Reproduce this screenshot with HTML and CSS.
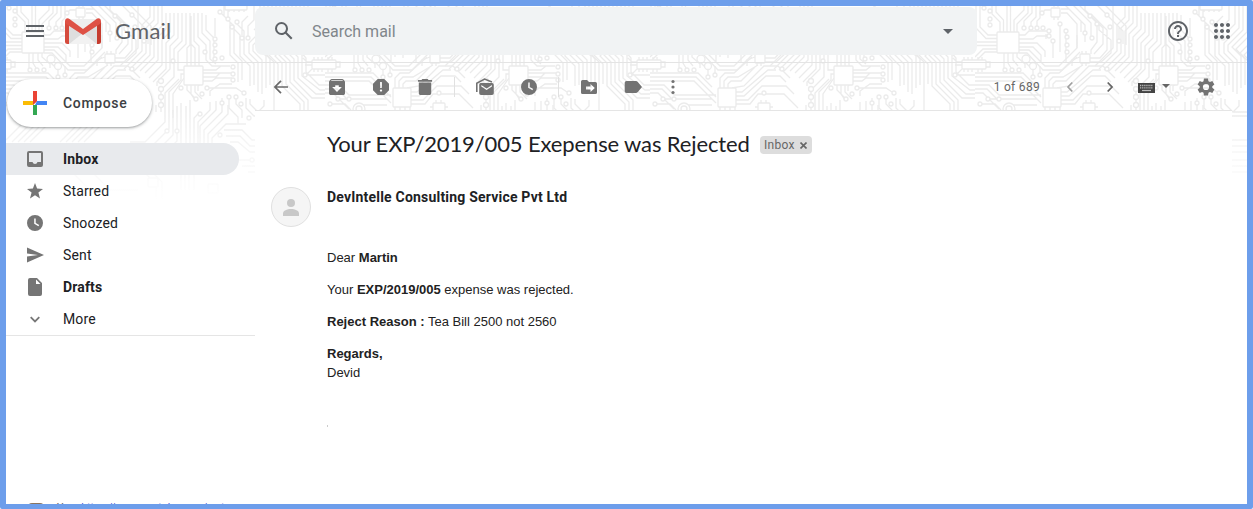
FILE: index.html
```html
<!DOCTYPE html>
<html lang="en">
<head>
<meta charset="utf-8">
<title>Gmail</title>
<link rel="stylesheet" href="styles.css">
</head>
<body>
<div class="app">
  <svg class="circuit" width="1253" height="210" aria-hidden="true">
    <defs>
      <pattern id="board" width="325" height="210" patternUnits="userSpaceOnUse">
        <g class="trace">
          <!-- traces above and left of the main chip -->
          <path d="M25 32V22L17 14V5M28.500 32V20L21 12V5M32 32V5M35.500 32V5M39 32V20L49 10V5M42 32V24L53 13V5M49 26V21L57 13V5M56 26V22L61 17V5M62 26V21L65 18V5"/>
          <path d="M22 35H13L5 27V5M22 38.500H11L1 28V5M22 42H0M22 45.500H0M22 49H8L0 57M22 52H10L2 60"/>
          <!-- traces fanning right from the main chip -->
          <path d="M44 35H50L54 31H72M44 39H58L62 36H73M44 43H62L70 51V57M44 47H58L66 55V62M44 50H54L70 66H84L102 48V35M44 53H52L68 70H87L105 52"/>
          <path d="M29 53V68M33 53V63L36 68M38 53V60L43 66M42 53V57L50 64V68"/>
          <path d="M0 73H48L62 87M0 77H46L66 97M0 81H44L66 103M0 85H14L24 95H66M0 89H12L22 99H62M0 93H8L24 109M13 99H24M5 104H20L26 110M38 105H62"/>
          <path d="M58 76V70L50 62M65 74V66M70 88V78L75 73H84L102 57M74 88V81L78 77H88L108 65M78 88V84L81 81H91L105 67M82 88L94 86L114 66H128L140 78M86 92H92L118 70H126M86 96H94L116 76H130L136 82M86 100H98L112 86H136L144 94M86 104H100L108 94H134L148 108"/>
          <!-- small chip traces -->
          <path d="M76 10H70L67 13M86 9H94L106 21V32M86 13H92L102 24V48M90 5L110 25V42M98 5L116 23V36M104 5L122 23V42L116 50V54M110 5V10L128 28V44L119 54M116 14L132 30V50L125 58H115M124 24V30L136 40V53L126 62H115M132 15L144 27V40M122 5L148 31V44M130 5L151 26V45"/>
          <path d="M91 33V62M78 42V58M71 39V34M85 24V52M97 66V60L105 57"/>
          <!-- nested runs across the centre -->
          <path d="M120 66L138 48V5M124 69L142 51V25L150 17V5M129 70L146 53V28L154 20V5M134 71L150 55V31L158 23V5M140 71L154 57V34L162 26V5M145 73L158 60V37L166 29V13M149 78L162 65V40L170 32V13M153 82L166 69V43L174 35V13M157 86V82L170 69V46L178 38V13"/>
          <path d="M161 112V90L174 77V49L182 41V13M165 112V93L179 79M184 70H178V52L186 44V13M184 74H181V80L169 92V112M184 78L173 94V118M187 66V48L190 45V13M191 66V16M195 66V48L190 43M199 66V46L194 41V13"/>
          <path d="M198 13V37L206 45V60L212 66H230M203 70H216L221 66M203 73H230M203 77H216L220 73H232M203 81H212L216 78H232M207 88H236L242 92M210 96V91L220 84H232M198 91V86L204 81M191 85V94L195 100M187 85V90L196 99M195 85V92L202 99M202 13V33L210 41V59L216 64M206 15V30L214 38V60"/>
          <path d="M156 105V112M215 18V36M220 12L230 22V55L238 63V82M224 5V16L234 26V53L242 61V80M228 18V10M232 27L240 35V56L250 66V86M237 24L244 31V54L254 64V85M242 35V22L248 16M248 38V26L254 20V5M254 30L260 24V5M264 5V28L249 43V53L258 62V92M268 5V30L253 45V51L262 60V94M272 5V32L257 47L266 56V88M276 5V34L261 49L270 59V85M280 5V38L265 53L274 62V110"/>
          <!-- left edge of the wide chip -->
          <path d="M284 5V40L269 55L278 64V84M288 5V43L275 56L282 63V86L300 104V112M292 5V42L279 55L286 62V84L304 102V112M296 5V41L283 54L290 61V82L308 100V112M300 5V39L287 52L294 59V80L312 98H325M304 5V37L291 50L298 57V78L316 94H325M308 5V35L295 48L302 55V76L320 90H325M310 42L300 51L306 58V72L319 85H325M312 62H307L303 58M312 65H305M312 69L306 75H325"/>
          <path d="M314 60V57M318 60V57M322 60V57M314 69V72M318 69V72M322 69V72M3 60V57M7 60V57M3 69V72M7 69V72M11 62H15V67H11"/>
          <!-- pins -->
          <path d="M79 7V4M83 7V4M79 17V20M83 17V20M107 54V51M111 54V51M107 63V66M111 63V66M70 107V111M75 107V111M80 107V111M85 107V111M229 10V12M234 10V12M239 10V12M244 10V12M111 103V100M116 103V100M108 107H105M120 107H123"/>
          <!-- lower half -->
          <path d="M6 140L34 112M12 142L42 112M18 142L48 112M24 142L54 112M30 142L60 112M60 142L90 112M66 142L96 112M72 142L102 112M78 142L108 112M84 142L114 112M130 142H145L165 122V112M132 148H150L169 129V112M128 154H154L173 135V110M120 160H158L177 141V106M116 166H162L181 145V103M181 190V150L186 145V106M185 190V152L190 147V100M189 190V154L194 149V118L199 113M194 190V156L198 152V122L210 110V102M200 150V126L216 110V101M204 150V130L222 112V104M208 148V134L228 114V105M212 146V138L226 124H246M224 130H242L252 140H300M226 136H240L250 146H310M230 142H238L250 152H325M238 160H325M242 166H300M248 172H325M150 170L162 182V200M144 172L156 184V200M90 170L110 190H138M70 170L90 190H104"/>
          <path d="M236 97V104L242 110V118M229 98V108L238 117V124M222 98V102M246 98V108L254 116H280M264 100V106L258 112M250 99V104L258 112H325"/>
        </g>
        <g class="node">
          <circle cx="49" cy="28" r="2"/><circle cx="56" cy="28" r="2"/><circle cx="62" cy="28" r="2"/><circle cx="68" cy="28" r="2"/><circle cx="74" cy="31" r="2"/><circle cx="74" cy="36" r="2"/><circle cx="78" cy="41" r="2"/><circle cx="15" cy="11" r="2"/><circle cx="15" cy="19" r="2"/><circle cx="15" cy="25" r="2"/><circle cx="9" cy="8" r="2"/>
          <circle cx="30" cy="70" r="2"/><circle cx="37" cy="70" r="2"/><circle cx="44" cy="70" r="2"/><circle cx="51" cy="59" r="4"/><circle cx="58" cy="66" r="3.500"/><circle cx="58" cy="77" r="2"/><circle cx="65" cy="75" r="2"/>
          <circle cx="92" cy="37" r="2"/><circle cx="92" cy="45" r="2"/><circle cx="92" cy="52" r="2"/><circle cx="91" cy="31" r="2"/><circle cx="67" cy="13" r="2"/><circle cx="85" cy="24" r="2"/><circle cx="115" cy="16" r="2"/><circle cx="122" cy="24" r="2"/><circle cx="110" cy="33" r="2"/><circle cx="117" cy="38" r="2"/><circle cx="132" cy="15" r="2"/><circle cx="144" cy="41" r="2"/><circle cx="135" cy="27" r="2"/><circle cx="132" cy="69" r="2"/><circle cx="114" cy="93" r="2"/>
          <circle cx="13" cy="99" r="2"/><circle cx="24" cy="99" r="2"/><circle cx="5" cy="104" r="2"/><circle cx="34" cy="109" r="6"/><circle cx="34" cy="109" r="3"/>
          <circle cx="161" cy="81" r="2.500"/><circle cx="161" cy="89" r="2.500"/><circle cx="161" cy="97" r="2.500"/><circle cx="161" cy="105" r="2.500"/><circle cx="181" cy="88" r="2"/><circle cx="173" cy="61" r="2"/><circle cx="196" cy="99" r="2"/><circle cx="202" cy="94" r="2"/><circle cx="200" cy="114" r="2"/><circle cx="207" cy="88" r="2"/><circle cx="244" cy="93" r="2"/><circle cx="233" cy="67" r="2"/><circle cx="233" cy="74" r="2"/><circle cx="233" cy="80" r="2"/>
          <circle cx="215" cy="39" r="2"/><circle cx="215" cy="45" r="2"/><circle cx="215" cy="52" r="2"/><circle cx="215" cy="59" r="2"/><circle cx="222" cy="58" r="2"/><circle cx="205" cy="52" r="2"/><circle cx="220" cy="12" r="2"/><circle cx="228" cy="19" r="2"/><circle cx="232" cy="27" r="2"/><circle cx="237" cy="22" r="2"/><circle cx="242" cy="38" r="2"/><circle cx="248" cy="38" r="2"/>
          <circle cx="229" cy="97" r="2"/><circle cx="236" cy="97" r="2"/><circle cx="241" cy="104" r="2"/><circle cx="222" cy="103" r="2"/><circle cx="249" cy="118" r="2"/><circle cx="167" cy="131" r="2"/><circle cx="177" cy="131" r="2"/><circle cx="220" cy="135" r="2"/><circle cx="252" cy="160" r="2"/><circle cx="305" cy="42" r="2"/><circle cx="310" cy="41" r="2"/><circle cx="305" cy="75" r="2"/><circle cx="317" cy="49" r="2"/>
        </g>
        <g class="chip">
          <rect x="22" y="32" width="22" height="21" rx="1"/><rect x="184" y="66" width="19" height="19" rx="1"/><rect x="76" y="8" width="9" height="9" rx="1"/><rect x="105" y="54" width="10" height="9" rx="1"/><rect x="225" y="0" width="22" height="10" rx="1"/><rect x="312" y="60" width="24" height="9" rx="1"/><rect x="-13" y="60" width="24" height="9" rx="1"/><rect x="68" y="88" width="18" height="19" rx="1"/><rect x="108" y="103" width="12" height="10" rx="1"/><rect x="148" y="178" width="10" height="9" rx="1"/><rect x="208" y="184" width="10" height="9" rx="1"/>
        </g>
      </pattern>
      <linearGradient id="fade" x1="0" y1="0" x2="0" y2="1">
        <stop offset="0.520" stop-color="#fff" stop-opacity="0"/><stop offset="0.700" stop-color="#fff" stop-opacity="0.550"/><stop offset="0.960" stop-color="#fff"/>
      </linearGradient>
    </defs>
    <rect width="1253" height="210" fill="url(#board)"/>
    <rect width="1253" height="210" fill="url(#fade)"/>
  </svg>

  <header class="header">
    <div class="brand">
      <svg class="menu" width="18" height="12" viewBox="0 0 18 12"><path d="M0 0h18v2H0zM0 5h18v2H0zM0 10h18v2H0z" fill="#5f6368"/></svg>
      <svg class="logo" width="36" height="27" viewBox="0 0 36 27">
        <path d="M2.500 1h31v25h-31z" fill="#e3e3e3"/><path d="M4 26L18 15l14 11z" fill="#f2f2f2"/><path d="M18 15L4 5v21zM18 15L32 5v21z" fill="#d8d8d8" opacity=".45"/>
        <path d="M3 1h30L18 12z" fill="#eee"/><path d="M0 3.500L4 6v20H2.500Q0 26 0 23.500z" fill="#d54b3d"/><path d="M36 3.500L32 6v20h1.500q2.500 0 2.500-2.500z" fill="#c63c2f"/>
        <path d="M0 3.500C0 .5 2.500-.5 4.500 1L18 11 31.500 1C33.500-.5 36 .5 36 3.500c0 1.500-.6 2.100-1.500 2.700L18 17 1.500 6.200C.6 5.600 0 5 0 3.500z" fill="#de5145"/>
      </svg>
      <span class="wordmark">Gmail</span>
    </div>
    <div class="search">
      <svg width="24" height="24" viewBox="0 0 24 24"><path d="M20.490 19l-5.730-5.730C15.530 12.200 16 10.910 16 9.500A6.500 6.500 0 1 0 9.500 16c1.410 0 2.700-.47 3.770-1.240L19 20.490 20.490 19zM5 9.500C5 7.010 7.010 5 9.500 5S14 7.010 14 9.500 11.990 14 9.500 14 5 11.990 5 9.500z" fill="#5f6368"/></svg>
      <span class="placeholder">Search mail</span>
      <svg class="caret" width="10" height="5" viewBox="0 0 10 5"><path d="M0 0h10L5 5z" fill="#5f6368"/></svg>
    </div>
    <div class="header-actions">
      <svg width="24" height="24" viewBox="0 0 24 24"><path d="M11 18h2v-2h-2v2zm1-16C6.480 2 2 6.480 2 12s4.480 10 10 10 10-4.480 10-10S17.520 2 12 2zm0 18c-4.410 0-8-3.590-8-8s3.590-8 8-8 8 3.590 8 8-3.590 8-8 8zm0-14c-2.210 0-4 1.790-4 4h2c0-1.100.9-2 2-2s2 .9 2 2c0 2-3 1.750-3 5h2c0-2.250 3-2.500 3-5 0-2.210-1.790-4-4-4z" fill="#5f6368"/></svg>
      <svg width="24" height="24" viewBox="0 0 24 24"><path d="M6 8c1.100 0 2-.9 2-2s-.9-2-2-2-2 .9-2 2 .9 2 2 2zm6 12c1.100 0 2-.9 2-2s-.9-2-2-2-2 .9-2 2 .9 2 2 2zm-6 0c1.100 0 2-.9 2-2s-.9-2-2-2-2 .9-2 2 .9 2 2 2zm0-6c1.100 0 2-.9 2-2s-.9-2-2-2-2 .9-2 2 .9 2 2 2zm6 0c1.100 0 2-.9 2-2s-.9-2-2-2-2 .9-2 2 .9 2 2 2zm4-8c0 1.100.9 2 2 2s2-.9 2-2-.9-2-2-2-2 .9-2 2zm-4 2c1.100 0 2-.9 2-2s-.9-2-2-2-2 .9-2 2 .9 2 2 2zm6 6c1.100 0 2-.9 2-2s-.9-2-2-2-2 .9-2 2 .9 2 2 2zm0 6c1.100 0 2-.9 2-2s-.9-2-2-2-2 .9-2 2 .9 2 2 2z" fill="#5f6368"/></svg>
    </div>
  </header>

  <div class="body">
    <aside class="sidebar">
      <button class="compose">
        <svg width="24" height="24" viewBox="0 0 24 24"><path d="M10 0h4v10l-2 2-2-2z" fill="#ea4335"/><path d="M14 10h10v4H12z" fill="#4285f4"/><path d="M10 14h4v10h-4z" fill="#34a853"/><path d="M0 10h10l2 2-2 2H0z" fill="#fbbc05"/><path d="M10 10h4l-4 4z" fill="#ea4335"/></svg>
        <span>Compose</span>
      </button>
      <nav class="nav">
        <a class="item active"><svg viewBox="0 0 20 20"><path fill-rule="evenodd" d="M4 2h12q2 0 2 2v12q0 2-2 2H4q-2 0-2-2V4q0-2 2-2zM4 4v9h3.500q.5 2 2.500 2t2.500-2H16V4z"/></svg><span>Inbox</span></a>
        <a class="item"><svg viewBox="0 0 20 20"><path d="M10 2l2.100 5.500 5.900.4-4.600 3.700 1.600 5.900-5-3.300-5 3.300 1.600-5.900L2 7.900l5.900-.4z"/></svg><span>Starred</span></a>
        <a class="item"><svg viewBox="0 0 20 20"><path fill-rule="evenodd" d="M10 2a8 8 0 1 1 0 16 8 8 0 0 1 0-16zM9.200 5.500v5.200l4.200 2.600.8-1.200-3.500-2.100V5.500z"/></svg><span>Snoozed</span></a>
        <a class="item"><svg viewBox="0 0 20 20"><path d="M2 2.500L19 10 2 17.500v-6L13 10 2 8.500z"/></svg><span>Sent</span></a>
        <a class="item bold"><svg viewBox="0 0 20 20"><path fill-rule="evenodd" d="M5 1h7l5 5v11q0 2-2 2H5q-2 0-2-2V3q0-2 2-2zm6 1.500V7h4.500z"/></svg><span>Drafts</span></a>
        <a class="item"><svg viewBox="0 0 20 20"><path d="M5.700 8.200L10 12.500l4.300-4.300" fill="none" stroke="#777" stroke-width="1.800"/></svg><span>More</span></a>
      </nav>
      <div class="chat"><i class="face"></i><span>Your <b>https://www.youtube.com/watc</b></span></div>
    </aside>

    <main class="main">
      <div class="toolbar">
        <span class="tool back"><svg viewBox="0 0 20 20"><path d="M17 10H4.500M10 3.800L3.900 10l6.100 6.200" fill="none" stroke="#6a6a6a" stroke-width="1.700"/></svg></span>
        <span class="tool"><svg viewBox="0.750 0.750 22.500 22.500"><path d="M20.540 5.230l-1.390-1.680C18.880 3.210 18.470 3 18 3H6c-.47 0-.88.21-1.160.55L3.460 5.230C3.170 5.570 3 6.020 3 6.500V19c0 1.100.9 2 2 2h14c1.100 0 2-.9 2-2V6.500c0-.48-.17-.93-.46-1.270zM12 17.500L6.500 12H10v-2h4v2h3.500L12 17.500zM5.120 5l.81-1h12l.94 1H5.120z"/></svg></span>
        <span class="tool"><svg viewBox="0.750 0.750 22.500 22.500"><path d="M15.730 3H8.270L3 8.270v7.460L8.270 21h7.460L21 15.730V8.270L15.730 3zM12 17.300c-.72 0-1.300-.58-1.300-1.300s.58-1.300 1.300-1.300 1.300.58 1.300 1.300-.58 1.300-1.300 1.300zm1-4.300h-2V6.500h2V13z"/></svg></span>
        <span class="tool"><svg viewBox="0.750 0.750 22.500 22.500"><path d="M5 7v12c0 1.100 1 2 2.200 2h9.600c1.200 0 2.200-.9 2.200-2V7H5zM20 4h-4l-1-1H9L8 4H4v2h16V4z"/></svg></span>
        <i class="divider"></i>
        <span class="tool"><svg viewBox="0 0 20 20"><path fill-rule="evenodd" d="M5.500 6H17q1.800 0 1.800 1.800v8.400Q18.800 18 17 18H6q-1.800 0-1.800-1.800V7.800Q4.200 6 5.500 6zm.8 2v1.600l5.300 3.500 5.300-3.500V8l-5.300 3.500z"/><path d="M1.800 15V6.200L9.500 2.100l7.500 3" fill="none" stroke="#737373" stroke-width="1.600"/></svg></span>
        <span class="tool"><svg viewBox="0 0 20 20"><path fill-rule="evenodd" d="M10 2a8 8 0 1 1 0 16 8 8 0 0 1 0-16zM9.200 5.500v5.200l4.200 2.600.8-1.200-3.500-2.100V5.500z"/></svg></span>
        <i class="divider"></i>
        <span class="tool"><svg viewBox="0 0 20 20"><path fill-rule="evenodd" d="M3.500 3H8l2 2h6.500Q18 5 18 6.500v9q0 1.500-1.500 1.500h-13Q2 17 2 15.500v-11Q2 3 3.500 3zM11.500 7v2.500H7v3h4.500V15l4.300-4z"/></svg></span>
        <span class="tool"><svg viewBox="0 0 20 20"><path d="M3.500 4H13q1 0 1.600.8L19 10l-4.400 5.200q-.6.8-1.600.8H3.500Q1.700 16 1.700 14.200V5.800Q1.700 4 3.500 4z"/></svg></span>
        <span class="tool more"><svg viewBox="0 0 20 20"><circle cx="10" cy="4.500" r="1.600"/><circle cx="10" cy="10" r="1.600"/><circle cx="10" cy="15.500" r="1.600"/></svg></span>
        <span class="count">1 of 689</span>
        <span class="tool page"><svg viewBox="0 0 20 20"><path d="M12.300 5.500L8 10l4.300 4.500" fill="none" stroke="#a0a0a0" stroke-width="1.700"/></svg></span>
        <span class="tool page"><svg viewBox="0 0 20 20"><path d="M7.700 5.500L12 10l-4.300 4.500" fill="none" stroke="#666" stroke-width="1.800"/></svg></span>
        <svg class="keyboard" width="17" height="10" viewBox="0 0 17 10"><path d="M0 0h17v10H0z" fill="#444"/><path d="M2 2.500h13M2 4.800h13" stroke="#bbb" stroke-width="1.300" stroke-dasharray="1.300 .8"/><path d="M4 7.500h9" stroke="#bbb" stroke-width="1.200"/></svg>
        <svg class="kb-caret" width="8" height="4" viewBox="0 0 8 4"><path d="M0 0h8L4 4z" fill="#666"/></svg>
        <span class="tool gear"><svg viewBox="0.750 0.750 22.500 22.500"><path fill-rule="evenodd" d="M9.700 2.500h4.600l.5 2.900 1.600.9 2.700-1 2.300 4-2.300 1.800v1.800l2.300 1.800-2.300 4-2.700-1-1.600.9-.5 2.900H9.700l-.5-2.900-1.600-.9-2.700 1-2.300-4 2.300-1.800v-1.800L2.600 9.300l2.300-4 2.700 1 1.600-.9zM12 8.500a3.500 3.500 0 1 0 0 7 3.500 3.500 0 0 0 0-7z"/></svg></span>
      </div>

      <article class="mail">
        <div class="subject-row">
          <h1 class="subject">Your EXP/2019/005 Exepense was Rejected</h1>
          <span class="label"><span>Inbox</span><svg width="7" height="7" viewBox="0 0 7 7"><path d="M.5.5l6 6M6.500.5l-6 6" stroke="#666" stroke-width="1.600"/></svg></span>
        </div>
        <div class="sender-row">
          <div class="avatar"><svg width="16" height="17" viewBox="0 0 16 17"><circle cx="8" cy="4" r="4" fill="#c8c8c8"/><path d="M0 17v-2.500C0 11.500 4 10 8 10s8 1.500 8 4.500V17z" fill="#c8c8c8"/></svg></div>
          <div class="sender">DevIntelle Consulting Service Pvt Ltd</div>
        </div>
        <div class="message">
          <p>Dear <b>Martin</b></p>
          <p>Your <b>EXP/2019/005</b> expense was rejected.</p>
          <p><b>Reject Reason :</b> Tea Bill 2500 not 2560</p>
          <p><b>Regards,</b><br>Devid</p>
          <i class="pixel"></i>
        </div>
      </article>
    </main>
  </div>
</div>
</body>
</html>
```
FILE: styles.css
```css
* { box-sizing: border-box; }
body { margin: 0; background: #fff; font-family: Roboto, "Liberation Sans", sans-serif; color: #202124; }
.app {
  position: relative;
  display: flex;
  flex-direction: column;
  width: 1253px;
  height: 509px;
  overflow: hidden;
  border: solid #6d9eeb;
  border-width: 6px 6px 5px;
  border-radius: 2px;
}
.circuit { position: absolute; left: -6px; top: -6px; }
.trace, .node, .chip { stroke: #ebebeb; stroke-width: 1.3; fill: none; }
.node, .chip { fill: #fff; }
.header, .body { position: relative; display: flex; }
.header { height: 57px; flex: none; border-bottom: 1px solid #e4e4e4; }
.brand { display: flex; align-items: center; width: 249px; height: 50px; padding-left: 20px; }
.logo { margin-left: 21px; }
.wordmark { margin-left: 14px; font: 400 22px/28px Lato, sans-serif; letter-spacing: .2px; color: #5f6368; }
.search { display: flex; align-items: center; width: 722px; height: 48px; margin-top: 1px; padding: 0 24px 0 17px; border-radius: 8px; background: #f1f3f4; }
.placeholder { margin-left: 16px; font-size: 16px; color: #80868b; }
.caret { margin-left: auto; }
.header-actions { display: flex; align-items: center; gap: 20px; height: 50px; margin-left: auto; padding-right: 13px; }

.body { flex: 1; min-height: 0; }
.sidebar { display: flex; flex-direction: column; width: 249px; padding-top: 16px; overflow: hidden; }
.compose {
  display: flex;
  flex: none;
  align-items: center;
  gap: 16px;
  width: 145px;
  height: 48px;
  margin: 0 0 16px 1px;
  padding: 0 0 0 16px;
  border: 0;
  border-radius: 24px;
  background: #fff;
  box-shadow: 0 1px 2px rgba(60, 64, 67, .35), 0 1px 3px 1px rgba(60, 64, 67, .15);
  font: 500 14px/20px Roboto, sans-serif;
  letter-spacing: .65px;
  color: #3c4043;
}
.nav { flex: none; height: 193px; border-bottom: 1px solid #e5e5e5; }
.item { display: flex; align-items: center; gap: 18px; width: 233px; height: 32px; padding-left: 19px; font-size: 14px; letter-spacing: .15px; }
.item svg { width: 20px; height: 20px; fill: #757575; }
.active { background: #e8eaed; border-radius: 0 16px 16px 0; }
.active, .bold { font-weight: 700; }
.chat { display: flex; flex: none; margin-top: 164px; padding-left: 22px; font-size: 10.600px; line-height: 15px; color: #666; white-space: nowrap; }
.chat b { font-weight: 400; color: #4a4fd6; }
.face { width: 16px; height: 16px; margin: 3px 13px 0 0; border-radius: 4px; background: #8a7560; }

.main { flex: 1; min-width: 0; }
.toolbar { display: flex; align-items: center; height: 48px; margin-right: 15px; border-bottom: 1px solid #e5e5e5; }
.tool { display: flex; justify-content: center; width: 44px; flex: none; }
.tool svg { width: 20px; height: 20px; fill: #737373; }
.back { width: 52px; margin-right: 8px; }
.divider { width: 1px; height: 20px; margin: 0 8px 0 7px; background: #e1e1e1; }
.more { width: 36px; }
.count { margin-left: auto; padding-right: 10px; font-size: 12px; letter-spacing: .3px; color: #666; white-space: nowrap; }
.page { width: 40px; }
.keyboard { margin: 3px 7px 0 8px; }
.kb-caret { margin-bottom: 2px; }
.gear { width: 20px; margin: 0 16px 0 26px; }

.mail { height: 394px; margin-right: 15px; padding: 20px 16px 0; background: #fff; }
.subject-row { display: flex; align-items: center; height: 28px; padding-left: 56px; }
.subject { width: 433px; margin: -2px 0 0; font: 400 22px/28px Lato, sans-serif; letter-spacing: -.13px; white-space: nowrap; }
.label { display: flex; align-items: center; gap: 5px; width: 52px; height: 18px; padding: 0 4px; border-radius: 4px; background: #ddd; font-size: 12px; letter-spacing: .3px; color: #666; }
.sender-row { display: flex; gap: 16px; height: 89px; padding-top: 28px; }
.avatar { display: flex; align-items: center; justify-content: center; width: 40px; height: 40px; border: 1px solid #e0e0e0; border-radius: 50%; background: #f5f5f5; }
.sender { font-size: 14px; font-weight: 700; line-height: 20px; letter-spacing: .2px; white-space: nowrap; }
.message { padding-left: 56px; font: 13px/19px "Liberation Sans", sans-serif; color: #222; }
.message p { margin: 0 0 13px; }
.pixel { display: block; width: 1px; height: 2px; margin-top: 43px; background: #ccc; }
```
